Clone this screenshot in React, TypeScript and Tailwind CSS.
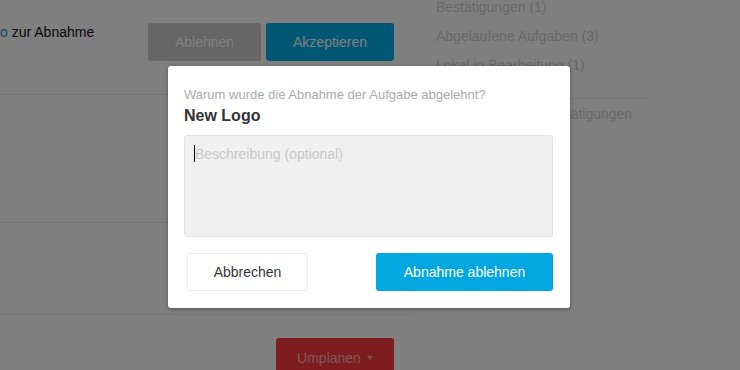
const sideItems = ['Bestätigungen (1)', 'Abgelaufene Aufgaben (3)', 'Lokal in Bearbeitung (1)']

export default function App() {
  return (
    <div className="relative w-[740px] h-[370px] overflow-hidden bg-white text-[14px] font-['Liberation_Sans',Arial,sans-serif]">
      {/* page behind the overlay */}
      <div className="flex">
        <div className="w-[413px] shrink-0">
          <div className="flex items-start h-[95px] pt-[23px] border-b border-[#ececec]">
            <div className="w-[148px] pt-[1px] leading-[16px] text-[#111]">
              <span className="text-[#1a8fd0]">o</span> zur Abnahme
            </div>
            <button className="w-[113px] h-[38px] rounded-[3px] bg-[#cccccc] text-white">Ablehnen</button>
            <button className="ml-[5px] w-[128px] h-[38px] rounded-[3px] bg-[#00aee8] text-white">Akzeptieren</button>
          </div>
          <div className="h-[128px] border-b border-[#ececec]" />
          <div className="h-[92px] border-b border-[#ececec]" />
          <div className="pt-[23px] pl-[276px]">
            <button className="flex items-center justify-center gap-[6px] w-[118px] h-[40px] rounded-[3px] bg-[#fa3a3e] text-white/60">
              Umplanen
              <span className="w-0 h-0 border-x-[3px] border-x-transparent border-t-[4px] border-t-white/60" />
            </button>
          </div>
        </div>
        <div className="ml-[23px] w-[212px] text-[#cfcfcf] leading-[16px]">
          <div className="flex flex-col gap-[13px] -mt-[1px] pb-[25px] border-b border-[#ececec]">
            {sideItems.map((t) => (
              <div key={t}>{t}</div>
            ))}
          </div>
          <div className="pt-[7px] whitespace-nowrap">Abgeschlossene Bestätigungen</div>
        </div>
      </div>

      {/* overlay */}
      <div className="absolute inset-0 bg-black/50" />

      {/* dialog */}
      <div className="absolute left-[168px] top-[66px] w-[402px] h-[242px] bg-white rounded-[3px] shadow-[0_1px_4px_rgba(0,0,0,0.35)] pl-4 pr-[17px] pt-[21px]">
        <div className="text-[13px] leading-[15px] text-[#aaaaaa]">Warum wurde die Abnahme der Aufgabe abgelehnt?</div>
        <div className="mt-[4px] text-[16px] leading-[19px] font-bold text-[#333]">New Logo</div>
        <div className="mt-[10px] h-[102px] rounded-[3px] border border-[#e2e2e2] bg-[#f0f0f0] pl-[9px] pt-[9px] flex items-start leading-[18px]">
          <span className="w-px h-[17px] bg-black" />
          <span className="text-[#c8c8c8]">Beschreibung (optional)</span>
        </div>
        <div className="mt-[16px] flex justify-between">
          <button className="ml-[3px] w-[121px] h-[38px] rounded-[3px] border border-[#ededed] bg-white text-[#333]">Abbrechen</button>
          <button className="w-[177px] h-[38px] rounded-[3px] bg-[#00a7e0] text-white">Abnahme ablehnen</button>
        </div>
      </div>
    </div>
  )
}
